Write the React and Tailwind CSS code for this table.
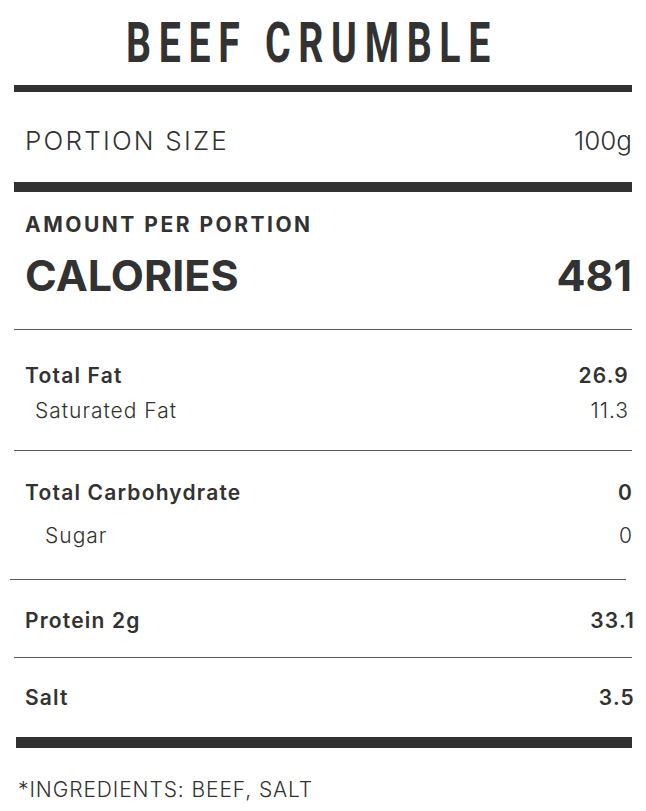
import React from 'react';

const body = { fontFamily: 'Inter, Lato, "Noto Sans", sans-serif' };

const Thin = ({ className = '' }) => <div className={`h-px bg-[#5a5a5a] ${className}`} />;

const Row = ({ label, value, bold, indent = '', className = '' }) => {
  const weight = bold ? 'font-semibold text-[21px] tracking-[1.2px]' : 'font-light text-[21px] tracking-[1px]';
  return (
    <div className={`flex items-center justify-between h-[32px] pl-[11px] ${className}`}>
      <span className={`${weight} ${indent}`}>{label}</span>
      <span className={`${weight} -mr-[1px]`}>{value}</span>
    </div>
  );
};

export default function App() {
  return (
    <div className="w-[646px] h-[811px] bg-white text-[#323232] px-[14px] overflow-hidden" style={body}>
      <div className="h-[85px] flex items-start justify-center pt-[11px] pr-[30px]">
        <h1
          className="text-[56px] leading-[64px] font-bold tracking-[11px] scale-x-[0.7] pl-[11px]"
          style={{ fontFamily: 'Roboto, "Liberation Sans", sans-serif' }}
        >
          BEEF CRUMBLE
        </h1>
      </div>
      <div className="h-[7px] bg-[#323232]" />

      <div className="h-[90px] flex items-center justify-between pl-[11px] pt-[6px]">
        <span className="text-[26px] font-light tracking-[2.2px]">PORTION SIZE</span>
        <span className="text-[26px] font-light">100g</span>
      </div>
      <div className="h-[10px] bg-[#323232]" />

      <div className="h-[137px] pl-[11px] pt-[20px]">
        <div className="h-[26px] flex items-center text-[21px] font-bold tracking-[2.5px]">AMOUNT PER PORTION</div>
        <div className="h-[50px] mt-[12px] flex items-center justify-between">
          <span className="text-[43px] font-bold">CALORIES</span>
          <span className="text-[43px] font-bold">481</span>
        </div>
      </div>
      <Thin />

      <div className="h-[120px] pt-[30px] pr-[4px]">
        <Row label="Total Fat" value="26.9" bold />
        <Row label="Saturated Fat" value="11.3" indent="pl-[10px]" className="mt-[3px]" />
      </div>
      <Thin />

      <div className="h-[128px] pt-[26px]">
        <Row label="Total Carbohydrate" value="0" bold />
        <Row label="Sugar" value="0" indent="pl-[20px]" className="mt-[11px]" />
      </div>
      <Thin className="-ml-[4px] mr-[6px]" />

      <div className="h-[77px] pt-[25px] -mr-[2px]">
        <Row label="Protein 2g" value="33.1" bold />
      </div>
      <Thin />

      <div className="h-[79px] pt-[24px] -mr-[2px]">
        <Row label="Salt" value="3.5" bold />
      </div>
      <div className="h-[11px] bg-[#323232] ml-[2px]" />

      <div className="pt-[26px] pl-[4px] text-[21px] font-light tracking-[0.9px]">*INGREDIENTS: BEEF, SALT</div>
    </div>
  );
}
